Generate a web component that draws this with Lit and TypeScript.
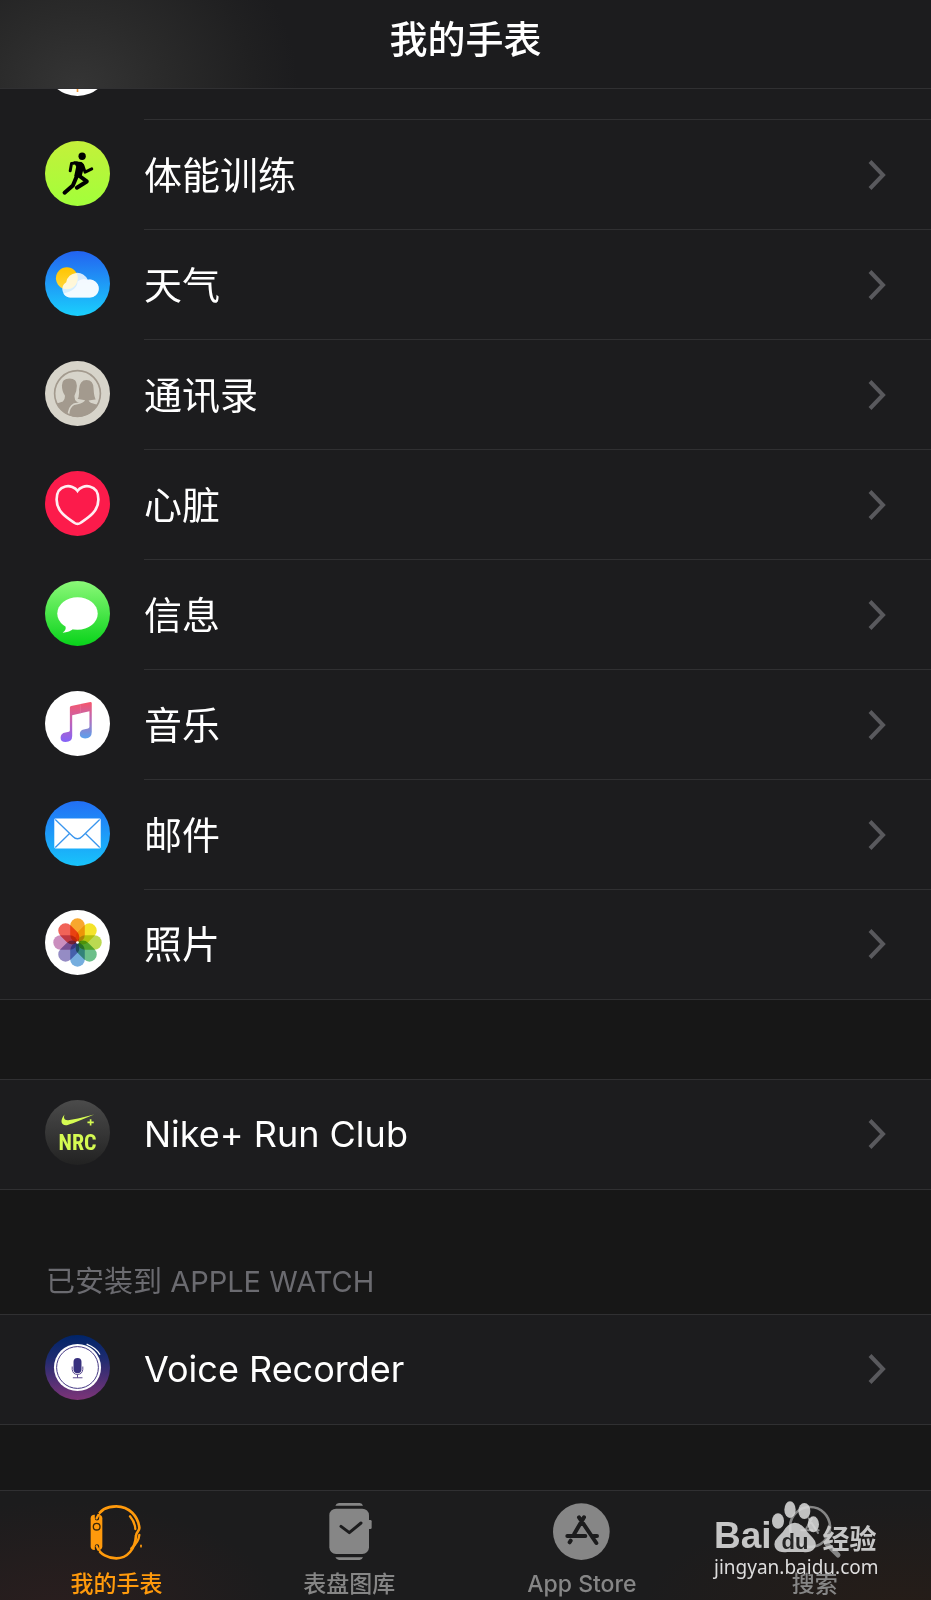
import { LitElement, html, css, svg } from "lit";
import { customElement, property } from "lit/decorators.js";

type IconName =
  | "workout" | "weather" | "contacts" | "heart" | "messages" | "music"
  | "mail" | "photos" | "nrc" | "recorder" | "blank";

const PETALS = ["#f8a01c", "#f3e117", "#b5d642", "#5fba80", "#69a6dc", "#8c82bf", "#c784b9", "#f0564a"];

const ART: Record<IconName, unknown> = {
  blank: svg`<circle cx="98" cy="98" r="98" fill="#fff"/><path d="M98 140V184" stroke="#f39b3a" stroke-width="5"/>`,
  workout: svg`
    <linearGradient id="g" x2="0" y2="1"><stop offset="0" stop-color="#c4f03a"/><stop offset="1" stop-color="#a2ff3a"/></linearGradient>
    <circle cx="98" cy="98" r="98" fill="url(#g)"/>
    <circle cx="112" cy="46" r="11"/>
    <path d="M86 61L110 63Q119 68 118 78L110 108L88 106L94 78Z"/>
    <g fill="none" stroke="#000" stroke-linecap="round" stroke-linejoin="round">
      <path d="M96 66L80 68L76 90M114 74L121 94L141 84" stroke-width="9"/>
      <path d="M102 104L126 122L96 141M96 106L84 134L59 156" stroke-width="12"/>
    </g>`,
  weather: svg`
    <linearGradient id="g" x2="0" y2="1"><stop offset="0" stop-color="#2363f0"/><stop offset="1" stop-color="#1ad0fd"/></linearGradient>
    <linearGradient id="s" x2="0" y2="1"><stop offset="0" stop-color="#ffc400"/><stop offset="1" stop-color="#ffd83a"/></linearGradient>
    <circle cx="98" cy="98" r="98" fill="url(#g)"/>
    <circle cx="66" cy="82" r="33" fill="url(#s)"/>
    <path d="M76 140A25 25 0 0 1 64 94A34 34 0 0 1 129 87A27 27 0 1 1 131 140Z" fill="#fff" opacity=".82"/>
    <path d="M76 140A25 25 0 0 1 56 128Q98 118 98 92Q112 80 129 87A27 27 0 1 1 131 140Z" fill="#fff" opacity=".7"/>`,
  contacts: svg`
    <clipPath id="c"><circle cx="98" cy="98" r="70"/></clipPath>
    <circle cx="98" cy="98" r="98" fill="#d7d4ca"/>
    <g clip-path="url(#c)" fill="#a39a8e">
      <path d="M51 74Q51 53 74 53Q97 53 96 76Q96 90 89 104Q88 118 96 123L112 130V170H20V132Q36 128 54 122Q61 116 60 104Q51 92 51 74Z"/>
      <path d="M70 172Q70 138 88 130Q110 126 116 120L95 116Q102 106 100 86Q102 55 125 55Q149 55 149 84Q150 108 157 118L136 121Q140 126 172 132V172Z" stroke="#d7d4ca" stroke-width="5"/>
    </g>
    <circle cx="98" cy="98" r="69" fill="none" stroke="#a39a8e" stroke-width="5"/>`,
  heart: svg`
    <circle cx="98" cy="98" r="98" fill="#fc1b4b"/>
    <path d="M98 60C84 38 35 38 35 86C35 122 64 140 88 156Q98 163 108 156C132 140 161 122 161 86C161 38 112 38 98 60Z" fill="none" stroke="#ffeef2" stroke-width="8"/>`,
  messages: svg`
    <linearGradient id="g" x2="0" y2="1"><stop offset="0" stop-color="#8bf878"/><stop offset="1" stop-color="#08d31a"/></linearGradient>
    <circle cx="98" cy="98" r="98" fill="url(#g)"/>
    <ellipse cx="98" cy="98" rx="61" ry="49" fill="#fff"/>
    <path d="M60 128Q68 146 53 156Q74 156 88 142Z" fill="#fff"/>`,
  music: svg`
    <linearGradient id="g" gradientUnits="userSpaceOnUse" x1="0" y1="35" x2="0" y2="150"><stop offset="0" stop-color="#f5566c"/><stop offset=".4" stop-color="#cc62a8"/><stop offset="1" stop-color="#8763f5"/></linearGradient>
    <linearGradient id="h" gradientUnits="userSpaceOnUse" x1="0" y1="35" x2="0" y2="150"><stop offset="0" stop-color="#f5566c"/><stop offset=".4" stop-color="#bd68b4"/><stop offset="1" stop-color="#4ea8f4"/></linearGradient>
    <circle cx="98" cy="98" r="98" fill="#fff"/>
    <path d="M75 50Q75 46 79 45L108 39V67L82 73V136Q82 154 62 154Q47 154 47 141Q47 127 62 125L72 123Q75 122 75 118Z" fill="url(#g)"/>
    <path d="M107 39L137 33Q141 33 141 37V124Q141 143 121 143Q105 143 105 130Q105 117 120 115L130 113Q134 112 134 108V61L107 67Z" fill="url(#h)"/>`,
  mail: svg`
    <linearGradient id="g" x2="0" y2="1"><stop offset="0" stop-color="#226ff5"/><stop offset="1" stop-color="#18c4fb"/></linearGradient>
    <circle cx="98" cy="98" r="98" fill="url(#g)"/>
    <rect x="28" y="53" width="140" height="90" rx="4" fill="#fff"/>
    <path d="M31 56L84 107Q98 121 112 107L165 56M31 140L74 98M165 140L122 98" fill="none" stroke="#3a96ee" stroke-width="4"/>`,
  photos: svg`
    <circle cx="98" cy="98" r="98" fill="#fff"/>
    <g class="petals">
      ${PETALS.map((c, i) => svg`<rect class="petal" x="76" y="25" width="44" height="72" rx="22" fill=${c} opacity=".92" transform="rotate(${i * 45} 98 98)"/>`)}
    </g>
    <circle cx="98" cy="98" r="4" fill="#fff"/>`,
  nrc: svg`
    <linearGradient id="g" x2="0" y2="1"><stop offset="0" stop-color="#4b4b4b"/><stop offset="1" stop-color="#222"/></linearGradient>
    <circle cx="98" cy="98" r="98" fill="url(#g)"/>
    <g fill="#d5fb52">
      <path d="M59 44C44 62 48 78 66 76Q80 73 148 44Q90 59 70 61C58 62 55 54 59 44Z"/>
      <path d="M135 58h5v7h7v5h-7v7h-5v-7h-7v-5h7Z"/>
      <text x="98" y="150" text-anchor="middle" class="mark">NRC</text>
    </g>`,
  recorder: svg`
    <linearGradient id="g" x2="0" y2="1"><stop offset="0" stop-color="#002468"/><stop offset=".35" stop-color="#1d2b70"/><stop offset="1" stop-color="#7d3478"/></linearGradient>
    <circle cx="98" cy="98" r="98" fill="url(#g)"/>
    <circle cx="98" cy="98" r="71" fill="#fff"/>
    <circle cx="98" cy="98" r="63" fill="none" stroke="#443783" stroke-width="3"/>
    <path d="M127 28Q153 38 165 58" fill="none" stroke="#fff" stroke-width="4" stroke-linecap="round"/>
    <rect x="86" y="69" width="24" height="46" rx="12" fill="#37307e"/>
    <path d="M82 95V104Q84 119 98 119Q112 119 114 104V95M98 119V129M84 129H113" fill="none" stroke="#5b4a8e" stroke-width="3"/>`,
};

@customElement("app-icon")
class AppIcon extends LitElement {
  @property() name: IconName = "blank";
  static styles = css`
    :host { display: block; flex: none; width: 65px; height: 65px; }
    svg { display: block; width: 100%; height: 100%; }
    .mark { font: bold 66px "Liberation Sans Narrow", "Roboto Condensed", "Liberation Sans", sans-serif; }
    .petals { isolation: isolate; }
    .petal { mix-blend-mode: multiply; }
  `;
  render() {
    return html`<svg viewBox="0 0 196 196" aria-hidden="true">${ART[this.name]}</svg>`;
  }
}

@customElement("settings-row")
class SettingsRow extends LitElement {
  @property() icon: IconName = "blank";
  @property() label = "";
  static styles = css`
    :host { display: block; font-size: 38px; }
    .row {
      display: flex; align-items: stretch; height: 110px; padding-left: 45px; gap: 34px;
      box-sizing: border-box; color: #fff; text-decoration: none;
    }
    app-icon { align-self: center; margin-bottom: 4px; }
    .body {
      flex: 1; display: flex; align-items: center; justify-content: space-between;
      padding-right: 45px; border-bottom: 1px solid var(--inner-line, #303032);
      line-height: 56px;
    }
    .chevron { width: 18px; height: 30px; fill: none; stroke: #59595d; stroke-width: 4; }
  `;
  render() {
    return html`<a class="row" href="#">
      <app-icon name=${this.icon}></app-icon>
      <span class="body"><span>${this.label}</span>
        <svg class="chevron" viewBox="0 0 18 30" aria-hidden="true"><path d="M2 1.5L15 15L2 28.5"/></svg>
      </span>
    </a>`;
  }
}

const APPS: [IconName, string][] = [
  ["workout", "体能训练"], ["weather", "天气"], ["contacts", "通讯录"], ["heart", "心脏"],
  ["messages", "信息"], ["music", "音乐"], ["mail", "邮件"], ["photos", "照片"],
];

const TABS = [
  {
    label: "我的手表", art: svg`
      <g fill="none" stroke="currentColor" stroke-width="8" stroke-linecap="round">
        <path d="M27 44C36 20 60 10 85 10C124 10 150 40 154 74C155 84 144 88 144 98C142 138 118 166 85 166C60 166 36 154 27 132"/>
        <path d="M126 40Q141 58 142 78M154 96Q152 118 130 136" stroke-width="7"/>
        <path d="M159 127V131" stroke-width="5"/>
      </g>
      <rect x="8" y="35" width="35" height="106" rx="11" fill="currentColor"/>
      <path d="M27 34V46M27 130V142" stroke="#1d1c1c" stroke-width="13" stroke-linecap="round"/>
      <path d="M31 36L26 46M31 140L26 130" stroke="currentColor" stroke-width="7" stroke-linecap="round"/>
      <circle cx="26" cy="71" r="10" fill="none" stroke="#3a2708" stroke-width="4"/>`,
  },
  {
    label: "表盘图库", art: svg`
      <g fill="currentColor"><rect x="25" y="17" width="119" height="136" rx="20"/><rect x="138" y="51" width="14" height="27" rx="4"/>
      <path d="M43 8Q46 1 54 0H116Q124 1 126 8ZM43 163H126Q124 170 116 171H54Q46 170 43 163Z"/></g>
      <path d="M60 70L85 89L120 60" fill="none" stroke="#1c1c1d" stroke-width="9" stroke-linecap="round" stroke-linejoin="round"/>`,
  },
  {
    label: "App Store", art: svg`
      <circle cx="85" cy="86" r="85" fill="currentColor"/>
      <g stroke="#1c1c1d" stroke-width="12" stroke-linecap="round">
        <path d="M93 43L64 92M78 43L130 120M43 99H97M122 99H132M53 113L50 118"/></g>`,
  },
  {
    label: "搜索", art: svg`
      <g fill="none" stroke="currentColor" stroke-linecap="round"><circle cx="72" cy="72" r="60" stroke-width="8"/>
      <path d="M122 122L156 156" stroke-width="15"/>
      <path d="M78 46L60 78M68 46L96 90M46 82H78M90 82H98" stroke-width="6"/></g>`,
  },
];

@customElement("app-root")
class AppRoot extends LitElement {
  static styles = css`
    :host {
      display: flex; flex-direction: column; min-height: 100vh; background: #171717; color: #fff;
      font-family: Inter, "Noto Sans CJK SC", sans-serif;
    }
    header {
      height: 88px; border-bottom: 1px solid #303032; display: flex; justify-content: center;
      background: radial-gradient(ellipse 220px 190px at 78px 88px, #353535, #2a2a2a 40%, #202021 80%, #1c1c1e);
    }
    h1 { margin: 0; padding-top: 11px; font-size: 38px; line-height: 56px; font-weight: 500; }
    main { flex: 1; }
    .group { background: #1c1c1e; }
    .group > settings-row:last-child { --inner-line: transparent; border-bottom: 1px solid #303032; margin-top: -1px; }
    .closed { border-top: 1px solid #303032; }
    .peek { height: 31px; overflow: hidden; display: flex; flex-direction: column; justify-content: flex-end; }
    .nike { margin-top: 79px; }
    .latin { font-size: 36px; }
    h2 {
      margin: 0; padding: 72px 46px 12px; font-size: 29px; line-height: 40px; font-weight: 400; color: #6b6b70;
    }
    nav {
      position: relative; height: 109px; border-top: 1px solid #303032; display: grid; grid-template-columns: repeat(4, 1fr);
      background: radial-gradient(ellipse 220px 110px at 60px 120px, #2a1e1e, transparent),
        radial-gradient(ellipse 260px 110px at 900px 120px, #261d18, transparent), #1c1c1d;
    }
    .tab {
      display: flex; flex-direction: column; align-items: center; gap: 8px; padding-top: 12px;
      color: #868686; text-decoration: none; font-size: 23px; line-height: 32px; font-weight: 500;
    }
    .tab.active { color: #ff9a0c; }
    .tab svg { width: 57px; height: 57px; overflow: visible; }
    .watermark {
      position: absolute; right: 50px; top: 10px; width: 167px; color: #c6c6c6; pointer-events: none;
    }
    .brand { display: flex; align-items: flex-end; height: 52px; }
    .bai { font: bold 37px/34px "Liberation Sans", sans-serif; }
    .brand svg { width: 43px; height: 52px; flex: none; overflow: visible; margin: 0 6px 0 2px; }
    .du { font: bold 66px "Liberation Sans", sans-serif; }
    .exp { font: bold 27px/30px "Noto Sans CJK SC", sans-serif; }
    .site { font: 19px/28px "Noto Sans", sans-serif; color: #dedede; white-space: nowrap; }
  `;
  render() {
    return html`
      <header><h1>我的手表</h1></header>
      <main>
        <section class="group">
          <div class="peek"><settings-row icon="blank"></settings-row></div>
          ${APPS.map(([icon, label]) => html`<settings-row icon=${icon} label=${label}></settings-row>`)}
        </section>
        <section class="group closed nike"><settings-row class="latin" icon="nrc" label="Nike+ Run Club"></settings-row></section>
        <h2>已安装到 APPLE WATCH</h2>
        <section class="group closed"><settings-row class="latin" icon="recorder" label="Voice Recorder"></settings-row></section>
      </main>
      <nav>
        ${TABS.map((t, i) => html`<a class="tab ${i === 0 ? "active" : ""}" href="#">
          <svg viewBox="0 0 171 171" aria-hidden="true">${t.art}</svg><span>${t.label}</span></a>`)}
        <div class="watermark">
          <div class="brand">
            <span class="bai">Bai</span>
            <svg viewBox="0 0 129 156" aria-hidden="true">
              <g fill="#d8d8d8" fill-opacity=".88"><ellipse cx="12" cy="60" rx="18" ry="23"/><ellipse cx="48" cy="26" rx="17" ry="25"/>
              <ellipse cx="91" cy="30" rx="18" ry="24"/><ellipse cx="118" cy="70" rx="17" ry="24"/>
              <path d="M34 82Q62 48 92 82Q98 92 112 106Q134 128 120 144Q108 156 88 153H40Q16 156 6 144Q-6 126 12 108Q28 94 34 82Z"/></g>
              <text class="du" x="63" y="144" text-anchor="middle" fill="#262626">du</text>
            </svg>
            <span class="exp">经验</span>
          </div>
          <div class="site">jingyan.baidu.com</div>
        </div>
      </nav>
    `;
  }
}
